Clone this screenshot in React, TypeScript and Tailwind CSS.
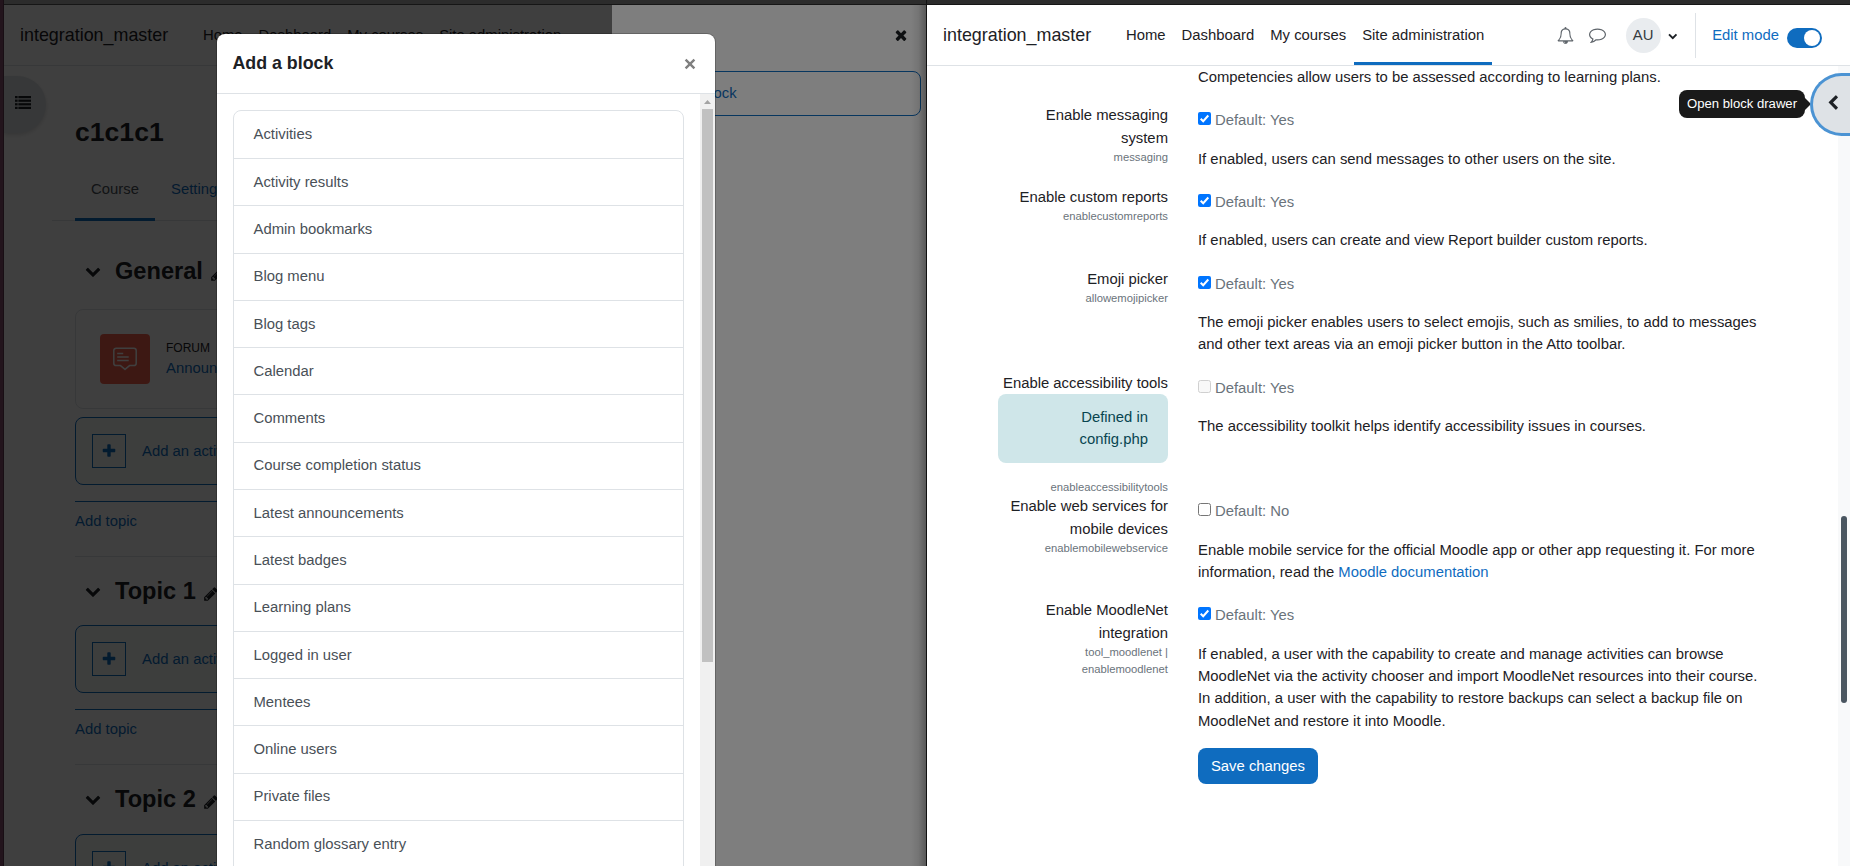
import type { ReactNode } from "react";

const ICONS = {
  plus: "M1600 736v192q0 40-28 68t-68 28h-416v416q0 40-28 68t-68 28h-192q-40 0-68-28t-28-68v-416h-416q-40 0-68-28t-28-68v-192q0-40 28-68t68-28h416v-416q0-40 28-68t68-28h192q40 0 68 28t28 68v416h416q40 0 68 28t28 68z",
  times:
    "M1490 1322q0 40-28 68l-136 136q-28 28-68 28t-68-28l-294-294-294 294q-28 28-68 28t-68-28l-136-136q-28-28-28-68t28-68l294-294-294-294q-28-28-28-68t28-68l136-136q28-28 68-28t68 28l294 294 294-294q28-28 68-28t68 28l136 136q28 28 28 68t-28 68l-294 294 294 294q28 28 28 68z",
  pencil:
    "M491 1536l91-91-235-235-91 91v107h128v128h107zm523-928q0-22-22-22-10 0-17 7l-542 542q-7 7-7 17 0 22 22 22 10 0 17-7l542-542q7-7 7-17zm-54-192l416 416-832 832h-416v-416zm683 96q0 53-37 90l-166 166-416-416 166-165q36-38 90-38 53 0 91 38l235 234q37 39 37 91z",
  down: "M1683 808l-742 741q-19 19-45 19t-45-19l-742-741q-19-19-19-45.5t19-45.5l166-165q19-19 45-19t45 19l531 531 531-531q19-19 45-19t45 19l166 165q19 19 19 45.5t-19 45.5z",
  left: "M1427 301l-531 531 531 531q19 19 19 45t-19 45l-166 166q-19 19-45 19t-45-19l-742-742q-19-19-19-45t19-45l742-742q19-19 45-19t45 19l166 166q19 19 19 45t-19 45z",
  bell: "M912 1696q0-16-16-16-59 0-101.5-42.5t-42.5-101.5q0-16-16-16t-16 16q0 73 51.5 124.5t124.5 51.5q16 0 16-16zm-666-288h1300q-266-300-266-832 0-51-24-105t-69-103-121.5-80.5-169.5-31.5-169.5 31.5-121.5 80.5-69 103-24 105q0 532-266 832zm1482 0q0 52-38 90t-90 38h-448q0 106-75 181t-181 75-181-75-75-181h-448q-52 0-90-38t-38-90q50-42 91-88t85-119.5 74.5-158.5 50-206 19.5-260q0-152 117-282.5t307-158.5q-8-19-8-39 0-40 28-68t68-28 68 28 28 68q0 20-8 39 190 28 307 158.5t117 282.5q0 139 19.5 260t50 206 74.5 158.5 85 119.5 91 88z",
  comment:
    "M896 384q-204 0-381.5 69.5t-282 187.5-104.5 255q0 112 71.5 213.5t201.5 175.5l87 50-27 96q-24 91-70 172 152-63 275-171l43-38 57 6q69 8 130 8 204 0 381.5-69.5t282-187.5 104.5-255-104.5-255-282-187.5-381.5-69.5zm896 512q0 174-120 321.5t-326 233-450 85.5q-70 0-145-8-198 175-460 242-49 14-114 22h-5q-15 0-27-10.5t-16-27.5v-1q-3-4-.5-12t2-10 4.5-9.5l6-9 7-8.5 8-9q7-8 31-34.5t34.5-38 31-39.5 32.5-51 27-59 26-76q-157-89-247.5-220t-90.5-281q0-174 120-321.5t326-233 450-85.5 450 85.5 326 233 120 321.5z",
};

function Icon({ name, className }: { name: keyof typeof ICONS; className: string }) {
  return (
    <svg viewBox="0 0 1792 1792" fill="currentColor" className={`shrink-0 ${className}`} aria-hidden="true">
      <path d={ICONS[name]} />
    </svg>
  );
}

function Navbar({ active, children }: { active?: string; children?: ReactNode }) {
  const items = ["Home", "Dashboard", "My courses", "Site administration"];
  return (
    <header className="flex h-[61px] shrink-0 border-b border-[#dee2e6] bg-white pl-4">
      <span className="mr-[27px] w-[148px] pt-[16px] text-[17.9px] leading-[28px]">integration_master</span>
      <nav className="flex">
        {items.map((item) => (
          <span
            key={item}
            className={`flex h-full border-b-[3px] px-2 pt-[19px] whitespace-nowrap ${
              item === active ? "border-[#0f6cbf]" : "border-transparent"
            }`}
          >
            {item}
          </span>
        ))}
      </nav>
      {children}
    </header>
  );
}

function SectionTitle({ children }: { children: string }) {
  return (
    <div className="flex h-[28px] items-center whitespace-nowrap">
      <Icon name="down" className="ml-[10px] size-[16px]" />
      <h3 className="ml-[14px] text-[23.6px] leading-[28px] font-bold">{children}</h3>
      <Icon name="pencil" className="mt-[5px] ml-[7px] size-[16px]" />
    </div>
  );
}

function AddActivity() {
  return (
    <div className="flex h-[68px] items-center rounded-lg border border-[#0f6cbf] bg-[#f5f9f6] pl-4 text-[#0f6cbf]">
      <span className="flex size-[34px] items-center justify-center border border-[#0f6cbf]">
        <Icon name="plus" className="size-[16px]" />
      </span>
      <span className="ml-4">Add an activity or resource</span>
    </div>
  );
}

function AddTopic() {
  return (
    <div className="mt-4 h-[55px] border-t border-[#0f6cbf] pt-[8px] text-[#0f6cbf]">Add topic</div>
  );
}

function CoursePage() {
  return (
    <div className="flex h-full flex-col bg-white">
      <Navbar />
      <div className="flex">
        <div className="w-[42px] shrink-0 pt-[10px]">
          <div className="flex h-[57px] items-center rounded-r-full bg-[#dee2e6] pl-[11px] shadow-[0_2px_4px_rgba(0,0,0,0.15)]">
            <svg viewBox="0 0 16 13" className="mt-[-4px] h-[13px] w-[16px]" fill="currentColor" aria-hidden="true">
              {[0, 3.6, 7.2, 10.8].map((y) => (
                <g key={y}>
                  <rect x="0" y={y} width="2.6" height="2.2" />
                  <rect x="3.4" y={y} width="12.6" height="2.2" />
                </g>
              ))}
            </svg>
          </div>
        </div>
        <div className="w-[700px] pt-[50px] pl-[6px]">
          <h2 className="pl-[23px] text-[26.6px] leading-[32px] font-bold">c1c1c1</h2>
          <div className="mt-[24px] flex h-[49px] border-b border-[#dee2e6] pl-[23px]">
            <span className="h-[49px] w-[80px] border-b-[3px] border-[#0f6cbf] pt-[6px] text-center text-[#495057]">
              Course
            </span>
            <span className="px-4 pt-[6px] text-[#0f6cbf]">Settings</span>
          </div>
          <div className="pt-[36px] pl-[23px]">
            <SectionTitle>General</SectionTitle>
            <div className="mt-[24px] flex h-[100px] items-center rounded-lg border border-[#dee2e6] pl-6">
              <span className="flex size-[50px] items-center justify-center rounded bg-[#f7634d]">
                <svg viewBox="0 0 24 24" className="size-[24px]" fill="none" stroke="white" aria-hidden="true">
                  <path
                    d="M3.2 1.2h17.6a2.4 2.4 0 0 1 2.4 2.4v12.6a2.4 2.4 0 0 1-2.4 2.4h-4.3L12 22.4l-4.5-3.8H3.2a2.4 2.4 0 0 1-2.4-2.4V3.6a2.4 2.4 0 0 1 2.4-2.4z"
                    strokeWidth="1.5"
                    strokeLinejoin="round"
                  />
                  <path d="M4.2 6.5h6M4.2 10h11.5M4.2 13.5h11.5" strokeWidth="1.3" />
                </svg>
              </span>
              <div className="ml-4">
                <div className="text-[12px] leading-[18px]">FORUM</div>
                <div className="leading-[23px] text-[#0f6cbf]">Announcements</div>
              </div>
            </div>
            <div className="h-2" />
            <AddActivity />
            <AddTopic />
            <div className="h-[69px] border-t border-[#dee2e6] pt-[20px]">
              <SectionTitle>Topic 1</SectionTitle>
            </div>
            <AddActivity />
            <AddTopic />
            <div className="h-[70px] border-t border-[#dee2e6] pt-[20px]">
              <SectionTitle>Topic 2</SectionTitle>
            </div>
            <AddActivity />
          </div>
        </div>
      </div>
    </div>
  );
}

function BlockDrawer() {
  return (
    <aside className="absolute top-0 right-0 bottom-0 w-[314px] bg-[#fdfdfd] pr-[5px] pl-[5px]">
      <div className="flex h-[66px] justify-end pt-[22px] pr-[12px]">
        <Icon name="times" className="size-[16px]" />
      </div>
      <div className="flex h-[45px] items-center rounded-lg border border-[#0f6cbf] pl-[19px] text-[#0f6cbf]">
        <Icon name="plus" className="mr-2 size-[14px]" />
        Add a block
      </div>
    </aside>
  );
}

const BLOCKS = [
  "Activities",
  "Activity results",
  "Admin bookmarks",
  "Blog menu",
  "Blog tags",
  "Calendar",
  "Comments",
  "Course completion status",
  "Latest announcements",
  "Latest badges",
  "Learning plans",
  "Logged in user",
  "Mentees",
  "Online users",
  "Private files",
  "Random glossary entry",
];

function AddBlockModal() {
  return (
    <div className="absolute top-[29px] bottom-[-20px] left-[213px] flex w-[498px] flex-col overflow-hidden rounded-t-lg bg-white shadow-[0_0_0_1px_rgba(0,0,0,0.2)]">
      <div className="flex h-[60px] shrink-0 items-center justify-between border-b border-[#dee2e6] pr-[19px] pl-[15.5px]">
        <h5 className="mt-[-2px] text-[17.8px] leading-[26px] font-bold">Add a block</h5>
        <svg viewBox="0 0 12 12" className="size-[12px] text-[#808080]" stroke="currentColor" strokeWidth="2.4" aria-hidden="true">
          <path d="M1.6 1.6l8.8 8.8M10.4 1.6l-8.8 8.8" />
        </svg>
      </div>
      <div className="flex min-h-0 flex-1 justify-between">
        <div className="mt-4 ml-4 w-[451px] rounded-t-lg border border-[#dee2e6] pt-[0.8px] text-[#495057]">
          {BLOCKS.map((block) => (
            <div key={block} className="h-[47.286px] border-b border-[#dee2e6] pt-[11.65px] pl-[19.5px]">
              {block}
            </div>
          ))}
        </div>
        <div className="flex w-[15px] flex-col items-center bg-[#f0f0f0] pt-[6px]">
          <svg viewBox="0 0 7 4" className="h-[4px] w-[7px]" fill="#a3a3a3" aria-hidden="true">
            <path d="M0 4L3.5 0L7 4z" />
          </svg>
          <div className="mt-[5px] h-[553px] w-[11px] bg-[#c1c1c1]" />
        </div>
      </div>
    </div>
  );
}

type CheckState = "on" | "off" | "disabled";

function Check({ state }: { state: CheckState }) {
  return (
    <svg viewBox="0 0 13 13" className="mt-[3px] size-[13px] shrink-0" aria-hidden="true">
      {state === "on" ? (
        <>
          <rect width="13" height="13" rx="2" fill="#0075ff" />
          <path d="M2.7 6.7L5.2 9.2L10.3 3.5" fill="none" stroke="white" strokeWidth="2" />
        </>
      ) : (
        <rect
          x="0.5"
          y="0.5"
          width="12"
          height="12"
          rx="2"
          fill={state === "off" ? "#ffffff" : "#f8f8f8"}
          stroke={state === "off" ? "#767676" : "#d0d0d0"}
        />
      )}
    </svg>
  );
}

interface SettingProps {
  label: string[];
  names: string[];
  state: CheckState;
  fallback: string;
  notice?: boolean;
  height: string;
  gap?: string;
  children: ReactNode;
}

function Setting({ label, names, state, fallback, notice, height, gap = "mt-[16.7px]", children }: SettingProps) {
  return (
    <div className={`flex ${height}`}>
      <div className="mr-[30px] w-[170px] shrink-0 text-right whitespace-nowrap">
        {label.map((line) => (
          <div key={line} className="leading-[23px]">
            {line}
          </div>
        ))}
        {notice && (
          <div className="mt-[-1px] mb-[17px] h-[69px] rounded-lg bg-[#cfe6e9] pt-[12px] pr-5 leading-[22px] text-[#084550]">
            Defined in
            <br />
            config.php
          </div>
        )}
        <div className="mt-[-1px] text-[11.25px] leading-[17px] text-[#6a737b]">
          {names.map((n) => (
            <div key={n}>{n}</div>
          ))}
        </div>
      </div>
      <div className="pt-[5px] whitespace-nowrap">
        <div className="flex h-[22px] gap-1 text-[#6a737b]">
          <Check state={state} />
          <span>Default: {fallback}</span>
        </div>
        <div className={gap}>{children}</div>
      </div>
    </div>
  );
}

function AdminPage() {
  return (
    <div className="flex h-full flex-col bg-white">
      <Navbar active="Site administration">
        <div className="ml-auto flex pt-[13px] pr-[28px]">
          <Icon name="bell" className="mt-[9px] size-[17px] text-[#5f656b]" />
          <Icon name="comment" className="mt-[8px] ml-[15px] size-[17px] text-[#5f656b]" />
          <span className="ml-[20px] flex size-[35px] items-center justify-center rounded-full bg-[#e9ecef] text-[#343a40]">
            AU
          </span>
          <Icon name="down" className="mt-[13px] ml-[7.5px] size-[9.5px]" />
          <span className="mt-[-5px] ml-[17px] h-[45px] w-px bg-[#dee2e6]" />
          <span className="ml-[16.5px] pt-[6px] text-[#0f6cbf]">Edit mode</span>
          <span className="mt-[10px] ml-[8px] flex h-[20px] w-[35px] items-center justify-end rounded-full bg-[#0f6cbf] pr-[2px]">
            <span className="size-[16px] rounded-full bg-white" />
          </span>
        </div>
      </Navbar>
      <div className="flex min-h-0 flex-1">
        <main className="w-[911px] shrink-0 pl-[71px]">
          <p className="h-[38px] pl-[200px]">Competencies allow users to be assessed according to learning plans.</p>
          <Setting label={["Enable messaging", "system"]} names={["messaging"]} state="on" fallback="Yes" height="h-[82px]">
            If enabled, users can send messages to other users on the site.
          </Setting>
          <Setting
            label={["Enable custom reports"]}
            names={["enablecustomreports"]}
            state="on"
            fallback="Yes"
            height="h-[82px]"
            gap="mt-[16px]"
          >
            If enabled, users can create and view Report builder custom reports.
          </Setting>
          <Setting
            label={["Emoji picker"]}
            names={["allowemojipicker"]}
            state="on"
            fallback="Yes"
            height="h-[104px]"
            gap="mt-[16px]"
          >
            The emoji picker enables users to select emojis, such as smilies, to add to messages
            <br />
            and other text areas via an emoji picker button in the Atto toolbar.
          </Setting>
          <Setting
            label={["Enable accessibility tools"]}
            names={["enableaccessibilitytools"]}
            state="disabled"
            fallback="Yes"
            notice
            height="h-[123px]"
            gap="mt-[16px]"
          >
            The accessibility toolkit helps identify accessibility issues in courses.
          </Setting>
          <Setting
            label={["Enable web services for", "mobile devices"]}
            names={["enablemobilewebservice"]}
            state="off"
            fallback="No"
            height="h-[104px]"
          >
            Enable mobile service for the official Moodle app or other app requesting it. For more
            <br />
            information, read the <span className="text-[#0f6cbf]">Moodle documentation</span>
          </Setting>
          <Setting
            label={["Enable MoodleNet", "integration"]}
            names={["tool_moodlenet |", "enablemoodlenet"]}
            state="on"
            fallback="Yes"
            height="h-[149px]"
          >
            If enabled, a user with the capability to create and manage activities can browse
            <br />
            MoodleNet via the activity chooser and import MoodleNet resources into their course.
            <br />
            In addition, a user with the capability to restore backups can select a backup file on
            <br />
            MoodleNet and restore it into Moodle.
          </Setting>
          <button className="ml-[200px] flex h-[36px] w-[120px] items-center justify-center rounded-lg bg-[#0f6cbf] text-white">
            Save changes
          </button>
        </main>
        <div className="flex w-[12px] justify-center bg-[#f8f9fa] pt-[450px]">
          <div className="h-[187px] w-[6px] rounded-full bg-[#495560]" />
        </div>
      </div>
    </div>
  );
}

export default function App() {
  return (
    <div className="flex h-[866px] w-[1850px] overflow-hidden bg-[#22141c] font-['Liberation_Sans',Arial,sans-serif] text-[14.85px] leading-[22.275px] text-[#1d2125]">
      <div className="w-[4px] shrink-0 border-r border-[#180e14]" />
      <div className="flex w-[922px] shrink-0 flex-col">
        <div className="h-[5px] shrink-0 border-b border-[#161616] bg-[#2c2c2c]" />
        <section className="relative min-h-0 flex-1 overflow-hidden">
          <CoursePage />
          <div className="absolute inset-0 bg-black/50" />
          <BlockDrawer />
          <div className="absolute inset-0 bg-black/50" />
          <div className="absolute top-0 right-0 bottom-0 w-[15px] bg-linear-to-r from-transparent via-black/8 to-black/30" />
          <AddBlockModal />
        </section>
      </div>
      <div className="w-px shrink-0 bg-[#111111]" />
      <div className="flex w-[923px] shrink-0 flex-col">
        <div className="h-[5px] shrink-0 border-b border-[#161616] bg-[#2c2c2c]" />
        <section className="relative min-h-0 flex-1 overflow-hidden">
          <AdminPage />
          <div className="absolute top-[67.5px] right-0 flex items-center">
            <span className="flex h-[28px] w-[126px] items-center justify-center rounded-lg bg-[#1a1a1a] text-[13.125px] whitespace-nowrap text-white">
              Open block drawer
            </span>
            <svg viewBox="0 0 6 12" className="h-[12px] w-[6px]" fill="#1a1a1a" aria-hidden="true">
              <path d="M0 0L6 6L0 12z" />
            </svg>
            <span className="ml-[-1px] flex h-[63px] w-[40px] items-center rounded-l-full border-[3px] border-r-0 border-[#4b93d3] bg-[#dee2e6] pl-[12px]">
              <Icon name="left" className="mt-[-3px] size-[16px]" />
            </span>
          </div>
        </section>
      </div>
    </div>
  );
}
